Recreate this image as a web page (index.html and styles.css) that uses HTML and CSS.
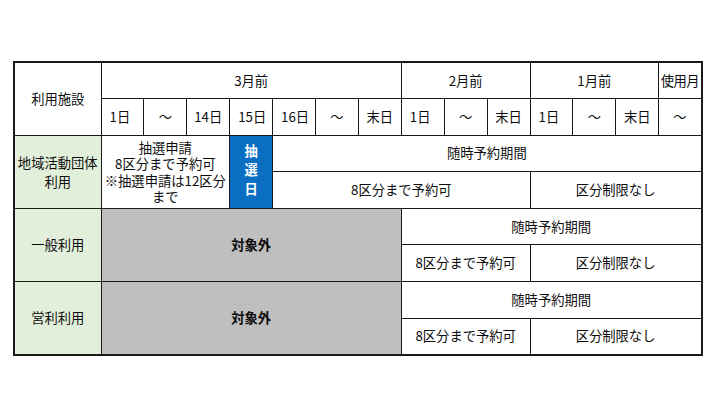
FILE: index.html
```html
<!DOCTYPE html>
<html lang="ja">
<head>
<meta charset="utf-8">
<link rel="stylesheet" href="styles.css">
</head>
<body>
<table class="schedule">
  <colgroup>
    <col class="col-label">
    <col class="col-day"><col class="col-day"><col class="col-day"><col class="col-day"><col class="col-day"><col class="col-day"><col class="col-day">
    <col class="col-day"><col class="col-day"><col class="col-day">
    <col class="col-day"><col class="col-day"><col class="col-day">
    <col class="col-day">
  </colgroup>
  <tr>
    <th class="label-head" rowspan="2">利用施設</th>
    <th colspan="7">3月前</th>
    <th colspan="3">2月前</th>
    <th colspan="3">1月前</th>
    <th class="tight">使用月</th>
  </tr>
  <tr>
    <td class="left">1日</td><td>～</td><td>14日</td><td class="left">15日</td><td class="left">16日</td><td>～</td><td>末日</td>
    <td class="left">1日</td><td>～</td><td>末日</td>
    <td class="left">1日</td><td>～</td><td>末日</td>
    <td>～</td>
  </tr>
  <tr>
    <th class="label" rowspan="2">地域活動団体<br>利用</th>
    <td class="lottery-note" colspan="3" rowspan="2">抽選申請<br>8区分まで予約可<br>※抽選申請は12区分<br>まで</td>
    <td class="lottery-day" rowspan="2">抽<br>選<br>日</td>
    <td colspan="10">随時予約期間</td>
  </tr>
  <tr>
    <td colspan="6">8区分まで予約可</td>
    <td colspan="4">区分制限なし</td>
  </tr>
  <tr>
    <th class="label" rowspan="2">一般利用</th>
    <td class="excluded" colspan="7" rowspan="2">対象外</td>
    <td colspan="7">随時予約期間</td>
  </tr>
  <tr>
    <td colspan="3">8区分まで予約可</td>
    <td colspan="4">区分制限なし</td>
  </tr>
  <tr>
    <th class="label" rowspan="2">営利利用</th>
    <td class="excluded" colspan="7" rowspan="2">対象外</td>
    <td colspan="7">随時予約期間</td>
  </tr>
  <tr>
    <td colspan="3">8区分まで予約可</td>
    <td colspan="4">区分制限なし</td>
  </tr>
</table>
</body>
</html>
```

FILE: styles.css
```css
html, body {
  margin: 0;
  padding: 0;
  background: #ffffff;
}

body {
  font-family: "Noto Sans CJK JP", "Noto Sans", sans-serif;
  color: #0d0d0d;
  font-size: 13.3px;
}

.schedule {
  margin: 61px 0 0 13px;
  width: 688px;
  table-layout: fixed;
  border-collapse: collapse;
  border: 2px solid #1a1a1a;
}

.col-label {
  width: 87px;
}

.col-day {
  width: 42.9px;
}

.schedule tr {
  height: 36.6px;
}

.schedule th,
.schedule td {
  border: 1px solid #1a1a1a;
  padding: 0;
  text-align: center;
  vertical-align: middle;
  font-weight: normal;
  line-height: 16px;
  white-space: nowrap;
  overflow: hidden;
}

.schedule td.left {
  text-align: left;
  padding-left: 8px;
}

.schedule th.tight {
  letter-spacing: -0.6px;
}

.schedule th.label {
  background: #e2efda;
  line-height: 19px;
}

.schedule td.lottery-note {
  line-height: 16.6px;
  padding-top: 4px;
  vertical-align: top;
}

.schedule td.lottery-day {
  background: #0a6fc2;
  color: #ffffff;
  font-weight: bold;
  line-height: 19px;
  padding-bottom: 4px;
}

.schedule td.excluded {
  background: #bfbfbf;
  font-weight: bold;
}
```
